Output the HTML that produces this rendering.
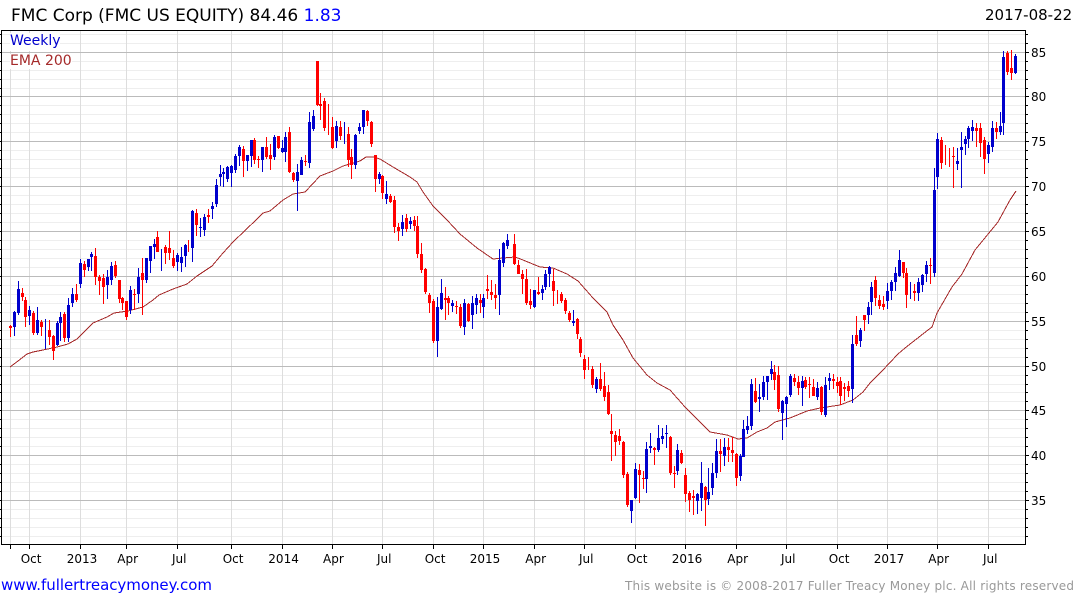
<!DOCTYPE html>
<html><head><meta charset="utf-8"><style>
html,body{margin:0;padding:0;background:#fff;width:1075px;height:600px;overflow:hidden}
svg{display:block}
text{font-family:"DejaVu Sans","Liberation Sans",sans-serif}
</style></head><body>
<svg width="1075" height="600" viewBox="0 0 1075 600" xmlns="http://www.w3.org/2000/svg">
<g shape-rendering="crispEdges" fill="none">
<path stroke="#eeeeee" d="M2 34.5H1025M2 43.5H1025M2 61.5H1025M2 70.5H1025M2 79.5H1025M2 88.5H1025M2 105.5H1025M2 114.5H1025M2 123.5H1025M2 132.5H1025M2 150.5H1025M2 159.5H1025M2 168.5H1025M2 177.5H1025M2 195.5H1025M2 204.5H1025M2 213.5H1025M2 222.5H1025M2 240.5H1025M2 249.5H1025M2 258.5H1025M2 267.5H1025M2 285.5H1025M2 294.5H1025M2 303.5H1025M2 312.5H1025M2 330.5H1025M2 339.5H1025M2 348.5H1025M2 357.5H1025M2 375.5H1025M2 384.5H1025M2 392.5H1025M2 401.5H1025M2 419.5H1025M2 428.5H1025M2 437.5H1025M2 446.5H1025M2 464.5H1025M2 473.5H1025M2 482.5H1025M2 491.5H1025M2 509.5H1025M2 518.5H1025M2 527.5H1025M2 536.5H1025"/>
<path stroke="#dddddd" d="M10.5 31V544M29.5 31V544M80.5 31V544M126.5 31V544M177.5 31V544M231.5 31V544M282.5 31V544M332.5 31V544M382.5 31V544M433.5 31V544M483.5 31V544M534.5 31V544M584.5 31V544M635.5 31V544M685.5 31V544M736.5 31V544M786.5 31V544M837.5 31V544M887.5 31V544M937.5 31V544M988.5 31V544"/>
<path stroke="#bbbbbb" d="M2 52.5H1025M2 96.5H1025M2 141.5H1025M2 186.5H1025M2 231.5H1025M2 276.5H1025M2 321.5H1025M2 366.5H1025M2 410.5H1025M2 455.5H1025M2 500.5H1025"/>
<rect x="10" y="33" width="50" height="18" fill="#fff"/>
<rect x="10" y="54" width="62" height="15" fill="#fff"/>
<path stroke="#a52a2a" d="M10 367L18 361L27 354L33 352L43 350L57 347L68 344L77 339L83 333L93 323L107 317L114 313L128 311L143 307L153 300L159 295L173 289L187 284L197 276L212 266L223 253L233 242L257 219L263 213L270 211L283 200L293 194L305 192L320 176L333 171L343 166L360 161L366 157L373 157L380 159L393 167L410 177L417 182L423 192L433 206L447 220L460 234L477 248L493 259L503 258L515 257L523 260L540 267L553 268L567 274L578 281L593 298L607 312L613 325L623 340L633 358L647 375L657 383L670 390L685 407L700 422L710 432L727 435L738 439L747 438L757 432L767 428L775 422L790 418L807 411L820 408L840 405L853 400L863 392L870 383L882 371L898 354L905 348L928 330L932 327L937 313L952 287L962 274L975 250L998 222L1010 200L1016 191"/>
<path stroke="#0000cc" d="M14.5 311V336M18.5 281V315M29.5 306V325M37.5 307V335M45.5 319V349M57.5 321V346M60.5 312V341M68.5 298V342M72.5 288V307M80.5 259V288M88.5 259V271M91.5 252V271M107.5 270V299M111.5 262V285M130.5 286V314M138.5 268V303M146.5 258V283M150.5 246V273M154.5 239V259M161.5 249V271M177.5 253V271M181.5 247V272M185.5 244V267M192.5 210V262M200.5 218V237M204.5 214V236M212.5 202V219M216.5 179V207M220.5 165V186M223.5 168V187M227.5 166V182M231.5 165V187M235.5 154V173M239.5 145V166M247.5 155V171M251.5 140V167M262.5 147V172M274.5 135V160M282.5 140V153M285.5 132V162M297.5 164V211M301.5 157V175M309.5 112V168M313.5 110V131M336.5 121V148M344.5 122V144M355.5 134V169M359.5 123V134M363.5 110V134M379.5 172V184M386.5 181V204M402.5 215V236M410.5 217V229M437.5 297V357M441.5 279V310M452.5 300V312M464.5 299V335M472.5 296V329M476.5 294V314M483.5 294V318M499.5 249V315M503.5 242V267M507.5 234V249M534.5 290V308M542.5 285V300M545.5 270V290M549.5 266V287M573.5 310V326M596.5 377V393M631.5 500V523M635.5 463V499M646.5 442V493M650.5 433V453M658.5 425V452M662.5 428V444M666.5 425V448M677.5 444V475M697.5 493V514M701.5 462V511M708.5 468V505M712.5 463V495M716.5 439V478M724.5 438V466M740.5 454V481M743.5 420V457M747.5 416V434M751.5 379V430M759.5 384V412M763.5 376V400M767.5 376V400M771.5 361V380M782.5 400V440M786.5 396V427M790.5 374V397M802.5 376V406M817.5 382V400M825.5 377V417M829.5 373V390M852.5 335V403M860.5 328V347M868.5 302V324M871.5 282V315M887.5 283V309M891.5 280V300M895.5 267V291M899.5 250V277M910.5 282V299M918.5 278V301M922.5 274V292M926.5 261V282M934.5 168V277M937.5 133V189M957.5 148V170M961.5 132V188M965.5 136V155M968.5 126V148M972.5 120V141M988.5 142V163M992.5 121V152M1000.5 112V135M1003.5 51V135M1015.5 54V74"/>
<path stroke="#ff0000" d="M10.5 325V337M22.5 288V301M25.5 297V327M33.5 311V335M41.5 320V336M49.5 320V345M53.5 335V360M64.5 312V342M76.5 284V302M84.5 261V277M95.5 248V285M99.5 275V295M103.5 274V304M115.5 261V278M119.5 280V303M122.5 297V310M126.5 301V320M134.5 289V310M142.5 258V315M157.5 231V252M165.5 245V264M169.5 231V260M173.5 250V268M188.5 240V252M196.5 209V236M208.5 209V223M243.5 146V177M254.5 138V164M258.5 156V168M266.5 137V159M270.5 144V170M278.5 136V149M289.5 127V173M293.5 172V182M305.5 155V166M317.5 61V106M320.5 93V120M324.5 98V131M328.5 104V135M332.5 117V149M340.5 121V140M348.5 127V167M351.5 149V179M367.5 110V126M371.5 121V147M375.5 155V192M382.5 175V199M390.5 194V203M394.5 196V233M398.5 223V241M406.5 214V232M414.5 216V231M417.5 216V258M421.5 243V273M425.5 268V294M429.5 293V313M433.5 299V343M445.5 287V320M448.5 296V315M456.5 301V314M460.5 304V328M468.5 303V322M480.5 294V313M487.5 275V299M491.5 280V300M495.5 284V309M514.5 234V265M518.5 260V274M522.5 270V294M526.5 269V305M530.5 289V309M538.5 277V295M553.5 269V306M557.5 290V304M561.5 292V303M565.5 298V314M569.5 311V322M577.5 318V339M580.5 337V357M584.5 355V379M588.5 357V370M592.5 366V388M600.5 363V391M604.5 372V401M608.5 385V415M611.5 414V461M615.5 431V456M619.5 429V445M623.5 441V478M627.5 472V507M639.5 464V503M643.5 471V489M654.5 447V465M670.5 436V475M674.5 466V488M681.5 450V464M685.5 468V502M689.5 491V512M693.5 490V515M705.5 486V526M720.5 439V472M728.5 438V462M732.5 437V462M736.5 453V486M755.5 378V403M774.5 365V390M778.5 366V412M794.5 374V386M798.5 376V395M805.5 377V389M809.5 377V398M813.5 379V396M821.5 386V415M833.5 374V389M837.5 377V393M840.5 377V405M844.5 383V401M848.5 381V397M856.5 316V346M864.5 315V331M875.5 276V306M879.5 295V309M883.5 296V310M903.5 262V278M906.5 268V308M914.5 284V301M930.5 258V284M941.5 137V169M945.5 145V165M949.5 148V167M953.5 147V188M976.5 123V147M980.5 123V157M984.5 137V174M996.5 122V139M1007.5 51V75M1011.5 50V80"/>
<path stroke="#0000cc" stroke-width="3" d="M14.5 312V327M18.5 289V313M29.5 310V316M37.5 320V333M57.5 323V345M60.5 317V323M68.5 305V338M72.5 294V303M80.5 263V284M88.5 259V267M91.5 254V257M107.5 277V285M111.5 266V280M130.5 290V310M138.5 277V294M146.5 258V280M150.5 246V261M154.5 244V247M177.5 255V262M181.5 257V263M185.5 245V256M192.5 211V248M200.5 227V228M204.5 217V230M212.5 206V209M216.5 185V204M220.5 174V177M223.5 172V174M227.5 167V179M231.5 166V173M235.5 156V170M239.5 147V156M247.5 155V161M251.5 140V156M262.5 147V160M274.5 137V157M282.5 148V152M285.5 137V152M297.5 172V181M301.5 160V175M309.5 122V163M313.5 116V129M336.5 126V141M355.5 135V165M359.5 127V131M363.5 110V127M379.5 174V179M386.5 194V199M402.5 222V229M410.5 221V224M437.5 307V341M441.5 293V309M452.5 303V306M464.5 303V327M472.5 303V315M476.5 298V305M483.5 298V307M499.5 260V295M503.5 243V263M507.5 240V246M534.5 290V307M542.5 289V293M545.5 274V287M549.5 267V274M573.5 321V323M596.5 379V389M631.5 500V511M635.5 469V498M646.5 449V479M650.5 446V448M658.5 438V450M662.5 436V439M666.5 433V434M677.5 450V471M697.5 494V501M701.5 483V498M708.5 492V499M712.5 473V488M716.5 451V473M724.5 447V456M740.5 456V476M743.5 429V457M747.5 426V430M751.5 384V426M759.5 397V399M763.5 382V397M767.5 376V382M771.5 369V374M782.5 401V413M786.5 397V404M790.5 376V395M802.5 381V388M817.5 388V397M825.5 385V415M829.5 378V381M852.5 344V389M860.5 330V341M868.5 307V315M871.5 287V302M887.5 291V301M891.5 282V291M895.5 273V282M899.5 260V276M918.5 282V293M922.5 275V285M926.5 265V274M934.5 190V273M937.5 139V177M957.5 161V164M961.5 147V150M965.5 139V144M968.5 128V139M972.5 127V131M988.5 145V154M992.5 128V147M1000.5 126V132M1003.5 57V123M1015.5 56V73"/>
<path stroke="#ff0000" stroke-width="3" d="M10.5 326V328M22.5 293V297M25.5 300V317M33.5 313V333M41.5 322V327M49.5 330V337M53.5 336V351M64.5 314V338M76.5 294V300M84.5 264V270M95.5 256V277M99.5 277V281M103.5 278V287M115.5 265V276M119.5 280V299M122.5 298V303M126.5 301V317M134.5 294V295M142.5 273V280M157.5 237V252M165.5 247V253M169.5 248V253M173.5 258V266M196.5 213V225M208.5 215V217M243.5 149V161M254.5 140V160M258.5 159V160M266.5 147V157M270.5 155V159M278.5 136V148M289.5 132V172M293.5 173V180M305.5 161V162M317.5 61V105M320.5 104V106M324.5 101V128M332.5 127V148M340.5 127V136M348.5 134V160M351.5 157V165M367.5 111V121M371.5 122V144M375.5 155V179M382.5 176V193M390.5 196V202M394.5 200V227M398.5 227V231M406.5 218V229M414.5 220V226M417.5 226V254M421.5 254V270M425.5 269V292M429.5 295V303M433.5 301V341M445.5 298V300M448.5 298V303M456.5 306V307M460.5 307V326M468.5 304V321M480.5 300V303M487.5 289V291M491.5 292V295M495.5 295V298M514.5 244V264M518.5 265V274M522.5 274V279M526.5 279V303M530.5 301V305M538.5 292V294M553.5 281V291M561.5 294V301M565.5 300V311M569.5 313V320M577.5 319V334M580.5 339V353M584.5 359V370M592.5 369V385M600.5 379V389M604.5 386V397M608.5 392V414M611.5 431V434M615.5 435V442M619.5 436V441M623.5 442V475M627.5 474V505M639.5 470V475M643.5 478V479M654.5 448V450M670.5 437V473M674.5 473V474M681.5 453V463M685.5 475V494M689.5 493V500M693.5 496V498M705.5 487V500M720.5 451V454M728.5 447V450M732.5 450V453M736.5 454V478M755.5 391V402M774.5 372V380M778.5 375V409M794.5 378V382M798.5 382V388M805.5 380V387M809.5 384V385M813.5 387V396M821.5 387V412M833.5 379V381M837.5 382V386M840.5 381V396M844.5 387V389M848.5 386V391M856.5 335V344M864.5 315V320M875.5 280V298M879.5 300V306M883.5 304V307M903.5 262V273M906.5 273V295M914.5 291V293M930.5 265V266M941.5 140V163M953.5 156V157M976.5 128V131M980.5 128V143M984.5 140V159M996.5 128V132M1007.5 53V72M1011.5 68V73"/>
<path stroke="#000" d="M1 30.5H1026M1 544.5H1026M1.5 30V545M1025.5 30V545"/>
<path stroke="#000" d="M0 34.5H1M0 43.5H1M0 52.5H1M0 61.5H1M0 70.5H1M0 79.5H1M0 88.5H1M0 96.5H1M0 105.5H1M0 114.5H1M0 123.5H1M0 132.5H1M0 141.5H1M0 150.5H1M0 159.5H1M0 168.5H1M0 177.5H1M0 186.5H1M0 195.5H1M0 204.5H1M0 213.5H1M0 222.5H1M0 231.5H1M0 240.5H1M0 249.5H1M0 258.5H1M0 267.5H1M0 276.5H1M0 285.5H1M0 294.5H1M0 303.5H1M0 312.5H1M0 321.5H1M0 330.5H1M0 339.5H1M0 348.5H1M0 357.5H1M0 366.5H1M0 375.5H1M0 384.5H1M0 392.5H1M0 401.5H1M0 410.5H1M0 419.5H1M0 428.5H1M0 437.5H1M0 446.5H1M0 455.5H1M0 464.5H1M0 473.5H1M0 482.5H1M0 491.5H1M0 500.5H1M0 509.5H1M0 518.5H1M0 527.5H1M0 536.5H1"/>
<path stroke="#000" d="M1026 34.5H1028M1026 43.5H1028M1026 52.5H1029M1026 61.5H1028M1026 70.5H1028M1026 79.5H1028M1026 88.5H1028M1026 96.5H1029M1026 105.5H1028M1026 114.5H1028M1026 123.5H1028M1026 132.5H1028M1026 141.5H1029M1026 150.5H1028M1026 159.5H1028M1026 168.5H1028M1026 177.5H1028M1026 186.5H1029M1026 195.5H1028M1026 204.5H1028M1026 213.5H1028M1026 222.5H1028M1026 231.5H1029M1026 240.5H1028M1026 249.5H1028M1026 258.5H1028M1026 267.5H1028M1026 276.5H1029M1026 285.5H1028M1026 294.5H1028M1026 303.5H1028M1026 312.5H1028M1026 321.5H1029M1026 330.5H1028M1026 339.5H1028M1026 348.5H1028M1026 357.5H1028M1026 366.5H1029M1026 375.5H1028M1026 384.5H1028M1026 392.5H1028M1026 401.5H1028M1026 410.5H1029M1026 419.5H1028M1026 428.5H1028M1026 437.5H1028M1026 446.5H1028M1026 455.5H1029M1026 464.5H1028M1026 473.5H1028M1026 482.5H1028M1026 491.5H1028M1026 500.5H1029M1026 509.5H1028M1026 518.5H1028M1026 527.5H1028M1026 536.5H1028"/>
<path stroke="#000" d="M10.5 545V549M29.5 545V549M80.5 545V549M126.5 545V549M177.5 545V549M231.5 545V549M282.5 545V549M332.5 545V549M382.5 545V549M433.5 545V549M483.5 545V549M534.5 545V549M584.5 545V549M635.5 545V549M685.5 545V549M736.5 545V549M786.5 545V549M837.5 545V549M887.5 545V549M937.5 545V549M988.5 545V549"/>
</g>
<text x="11" y="21" font-size="17" fill="#000">FMC Corp (FMC US EQUITY) 84.46 <tspan fill="#0000ff">1.83</tspan></text>
<text x="985" y="20" font-size="15" fill="#000">2017-08-22</text>
<text x="10" y="45" font-size="14" fill="#0000cc">Weekly</text>
<text x="10" y="65" font-size="14" fill="#a52a2a">EMA 200</text>
<g font-size="12" fill="#000">
<text x="1031" y="57">85</text><text x="1031" y="101">80</text><text x="1031" y="146">75</text><text x="1031" y="191">70</text><text x="1031" y="236">65</text><text x="1031" y="281">60</text><text x="1031" y="326">55</text><text x="1031" y="371">50</text><text x="1031" y="415">45</text><text x="1031" y="460">40</text><text x="1031" y="505">35</text>
<text x="20.7" y="563">Oct</text><text x="66.7" y="563">2013</text><text x="117.3" y="563">Apr</text><text x="172" y="563">Jul</text><text x="222.7" y="563">Oct</text><text x="268.3" y="563">2014</text><text x="323" y="563">Apr</text><text x="377" y="563">Jul</text><text x="424.7" y="563">Oct</text><text x="469.7" y="563">2015</text><text x="525.3" y="563">Apr</text><text x="579" y="563">Jul</text><text x="626.7" y="563">Oct</text><text x="671.7" y="563">2016</text><text x="727.3" y="563">Apr</text><text x="781" y="563">Jul</text><text x="828.7" y="563">Oct</text><text x="873.7" y="563">2017</text><text x="928.3" y="563">Apr</text><text x="983" y="563">Jul</text>
</g>
<text x="1" y="590" font-size="15" fill="#0000ff" textLength="211">www.fullertreacymoney.com</text>
<text x="625" y="590" font-size="12" fill="#999999" textLength="449">This website is © 2008-2017 Fuller Treacy Money plc. All rights reserved</text>
</svg>
</body></html>
